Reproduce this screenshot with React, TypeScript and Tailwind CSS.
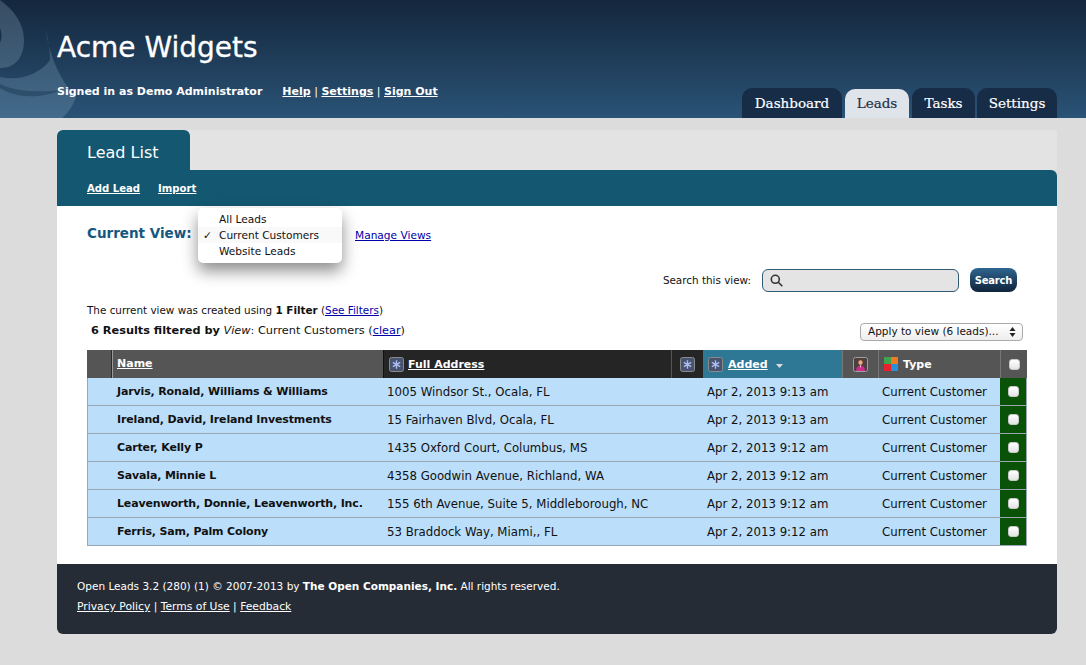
const leads = [
  ["Jarvis, Ronald, Williams & Williams", "1005 Windsor St., Ocala, FL", "Apr 2, 2013 9:13 am"],
  ["Ireland, David, Ireland Investments", "15 Fairhaven Blvd, Ocala, FL", "Apr 2, 2013 9:13 am"],
  ["Carter, Kelly P", "1435 Oxford Court, Columbus, MS", "Apr 2, 2013 9:12 am"],
  ["Savala, Minnie L", "4358 Goodwin Avenue, Richland, WA", "Apr 2, 2013 9:12 am"],
  ["Leavenworth, Donnie, Leavenworth, Inc.", "155 6th Avenue, Suite 5, Middleborough, NC", "Apr 2, 2013 9:12 am"],
  ["Ferris, Sam, Palm Colony", "53 Braddock Way, Miami,, FL", "Apr 2, 2013 9:12 am"],
];

function Swirl() {
  return (
    <svg className="absolute left-0 top-0" width="80" height="118" viewBox="0 0 80 118">
      {/* lower swoosh */}
      <path d="M45 28 C50 55 58 78 76 97 C73 106 68 113 62 118 L0 118 L0 77 C18 81 38 76 50 60 C50 48 48 38 45 28 Z" fill="#7fa3bd" fillOpacity="0.3" />
      {/* upper blob */}
      <path d="M0 0 C14 10 24 24 24 40 C24 52 20 60 14 64 C10 67 5 68 0 68 Z" fill="#8aa6ba" fillOpacity="0.3" />
      <path d="M0 28 C2 33 2 38 0 43 Z" fill="#1a3048" />
      {/* dark band */}
      <path d="M0 88 C14 97 36 100 62 90 C44 92 18 93 0 84 Z" fill="#1c3a56" fillOpacity="0.5" />
    </svg>
  );
}

function StarIcon() {
  return (
    <svg width="15" height="15" viewBox="0 0 15 15" className="shrink-0">
      <rect x="0.5" y="0.5" width="14" height="14" rx="2" fill="#47536f" stroke="#8a8a8a" />
      <path d="M7.500 3.200v8.600M3.800 5.300l7.400 4.400M11.200 5.300l-7.400 4.400" stroke="#aebcf0" strokeWidth="1.400" />
    </svg>
  );
}

function PersonIcon() {
  return (
    <svg width="15" height="15" viewBox="0 0 15 15" className="shrink-0">
      <rect x="0.500" y="0.500" width="14" height="14" rx="2" fill="#4a3f42" stroke="#a0a0a0" />
      <path d="M4.200 8V4.800C4.200 2.900 5.700 2 7.500 2s3.300.9 3.300 2.800V8z" fill="#6b3a22" />
      <ellipse cx="7.500" cy="5.600" rx="2.100" ry="2.400" fill="#e2ad90" />
      <path d="M3 14c0-3.400 1.600-5.500 4.500-5.500S12 10.600 12 14z" fill="#cf2a8c" />
      <path d="M6.800 8.500h1.400L7.500 11z" fill="#f3e3e6" />
    </svg>
  );
}

function ColorIcon() {
  return (
    <svg width="14" height="14" viewBox="0 0 14 14" className="shrink-0">
      <rect x="0" y="0" width="7" height="7" fill="#3fa34d" />
      <rect x="7" y="0" width="7" height="7" fill="#ee7a22" />
      <rect x="0" y="7" width="7" height="7" fill="#e8202a" />
      <rect x="7" y="7" width="7" height="7" fill="#2a8fd8" />
    </svg>
  );
}

function CheckBox() {
  return <span className="block h-[11px] w-[11px] rounded-[3px] border border-[#c8c8c8] bg-gradient-to-b from-white to-[#e4e4e4]" />;
}

export default function App() {
  return (
    <div className="min-h-[665px] bg-[#dcdcdc] font-['DejaVu_Sans',sans-serif] text-[10.4px] text-[#111]">
      <header className="relative h-[118px] overflow-hidden bg-gradient-to-b from-[#14273d] to-[#2a5376]">
        <Swirl />
        <div className="relative ml-[57px] flex h-full w-[1000px] items-end justify-between">
          <div className="h-full">
            <h1 className="pt-[29px] text-[28px] leading-[38px] text-white [-webkit-text-stroke:0.3px_white]">Acme Widgets</h1>
            <div className="mt-[16px] flex text-[11px] leading-[18px] font-bold text-white">
              <span>Signed in as Demo Administrator</span>
              <span className="ml-[20px] font-normal">
                <a className="font-bold underline">Help</a> | <a className="font-bold underline">Settings</a> | <a className="font-bold underline">Sign Out</a>
              </span>
            </div>
          </div>
          <nav className="flex font-['DejaVu_Serif',serif] text-[13.5px] text-white [-webkit-text-stroke:0.2px]">
            <a className="flex h-[30px] w-[100px] items-center justify-center rounded-t-[10px] bg-[#162c47]">Dashboard</a>
            <a className="ml-[3px] flex h-[29px] w-[64px] items-center justify-center self-end rounded-t-[10px] bg-[#dfe3ea] text-[#1d3148]">Leads</a>
            <a className="ml-[3px] flex h-[30px] w-[63px] items-center justify-center rounded-t-[10px] bg-[#162c47]">Tasks</a>
            <a className="ml-[2px] flex h-[30px] w-[80px] items-center justify-center rounded-t-[10px] bg-[#162c47]">Settings</a>
          </nav>
        </div>
      </header>

      <main className="ml-[57px] mt-[12px] w-[1000px] pb-[31px]">
        <div className="bg-[#e3e3e3]">
          <div className="flex h-[40px] w-[133px] items-center rounded-t-[6px] bg-[#135770] pl-[30px] pt-[5px] text-[16px] text-white">Lead List</div>
        </div>
        <div className="flex h-[36px] items-center gap-[18px] rounded-tr-[6px] bg-[#135770] pl-[30px] pt-[1px] text-[10.1px] font-bold text-white">
          <a className="underline">Add Lead</a>
          <a className="underline">Import</a>
        </div>

        <section className="relative bg-white px-[30px] pb-[18px] pt-[16px]">
          <div className="flex h-[24px] items-center">
            <span className="w-[268px] pb-[2px] text-[13.5px] font-bold text-[#14577f]">Current View:</span>
            <a className="mt-[3px] text-[10.6px] text-[#0000a8] underline">Manage Views</a>
          </div>
          <div className="absolute left-[141px] top-[2px] z-10 w-[144px] rounded-[5px] bg-white pb-[4px] pt-[3px] text-[10.6px] leading-[16px] shadow-[0_8px_16px_rgba(0,0,0,0.45)]">
            <div className="pl-[21px]">All Leads</div>
            <div className="relative bg-[#f9f9f9] pl-[21px]">
              <span className="absolute left-[5px]">✓</span>
              Current Customers
            </div>
            <div className="pl-[21px]">Website Leads</div>
          </div>

          <div className="mt-[22px] flex h-[24px] items-center justify-end pr-[10px]">
            <span className="pt-[1px]">Search this view:</span>
            <div className="ml-[11px] flex h-[23px] w-[197px] items-center rounded-[6px] border border-[#2f5c74] bg-[#e4e4e4] pl-[7px]">
              <svg width="13" height="13" viewBox="0 0 13 13" fill="none" stroke="#333" strokeWidth="1.600">
                <circle cx="5.300" cy="5.300" r="4" />
                <path d="M8.300 8.300l4 4" />
              </svg>
            </div>
            <button className="ml-[11px] h-[24px] w-[47px] rounded-[8px] bg-gradient-to-b from-[#2f6690] to-[#10243c] text-[10px] font-bold tracking-[-0.2px] text-white">Search</button>
          </div>

          <p className="mt-[10px] leading-[16px]">
            The current view was created using <b>1 Filter</b> (<a className="text-[#0000a8] underline">See Filters</a>)
          </p>
          <div className="mt-[4px] flex h-[20px] items-center justify-between pl-[4px] pr-[4px] text-[11.3px]">
            <p className="pb-[2px]">
              <b>6 Results filtered by</b> <i>View</i>: Current Customers (<a className="text-[#0000a8] underline">clear</a>)
            </p>
            <div className="flex h-[18px] w-[163px] items-center justify-between rounded-[4px] border border-[#aaa] bg-gradient-to-b from-white to-[#eee] pl-[7px] pr-[6px] text-[10.5px]">
              <span>Apply to view (6 leads)...</span>
              <svg width="7" height="10" viewBox="0 0 7 10" fill="#222"><path d="M3.500 0l3 4H.5zM3.500 10l-3-4h6z" /></svg>
            </div>
          </div>

          <div className="mt-[8px] w-[940px] border-x border-[#9aa7b2]">
            <div className="-mx-px flex h-[28px] items-stretch bg-[#555] text-[11px] font-bold text-white">
              <div className="w-[25px] border-r border-[#2a2a2a]" />
              <div className="flex w-[271px] items-center border-l border-[#999] pl-[4px]"><a className="underline">Name</a></div>
              <div className="flex w-[288px] items-center gap-[4px] border-l border-[#111] bg-[#252525] pl-[5px]">
                <StarIcon /><a className="mt-[2px] underline">Full Address</a>
              </div>
              <div className="flex w-[32px] items-center justify-center border-l border-[#555] bg-[#252525]"><StarIcon /></div>
              <div className="flex w-[139px] items-center gap-[5px] bg-[#2e7795] pl-[5px]">
                <StarIcon /><a className="mt-[2px] underline">Added</a>
                <svg className="ml-[3px] mt-[3px]" width="7" height="4" viewBox="0 0 7 4" fill="#ddd"><path d="M0 0h7L3.500 4z" /></svg>
              </div>
              <div className="flex w-[36px] items-center justify-center border-l border-[#777]"><PersonIcon /></div>
              <div className="flex w-[122px] items-center gap-[5px] border-l border-[#777] pl-[5px]">
                <ColorIcon /><span className="mt-[2px]">Type</span>
              </div>
              <div className="flex w-[27px] items-center justify-center border-l border-[#777]"><CheckBox /></div>
            </div>
            {leads.map((lead) => (
              <div key={lead[0]} className="flex h-[28px] items-stretch border-b border-[#9aa7b2] bg-[#bbdefb] text-[11.75px]">
                <div className="w-[25px]" />
                <div className="flex w-[270px] items-center pl-[4px] pt-[2px] text-[11px] font-bold tracking-[-0.15px] whitespace-nowrap">{lead[0]}</div>
                <div className="flex w-[320px] items-center pl-[4px] pt-[2px] whitespace-nowrap">{lead[1]}</div>
                <div className="flex w-[139px] items-center pl-[4px] pt-[2px] whitespace-nowrap">{lead[2]}</div>
                <div className="w-[36px]" />
                <div className="flex w-[122px] items-center pl-[4px] pt-[2px] whitespace-nowrap">Current Customer</div>
                <div className="flex flex-1 items-center justify-center bg-[#0a5207]"><CheckBox /></div>
              </div>
            ))}
          </div>
        </section>

        <footer className="h-[70px] rounded-b-[6px] bg-[#262c36] pl-[20px] pt-[12px] leading-[20px] text-white">
          <p className="text-[10.5px]">Open Leads 3.2 (280) (1) © 2007-2013 by <b>The Open Companies, Inc.</b> All rights reserved.</p>
          <p className="mt-[1px] text-[10.75px]"><a className="underline">Privacy Policy</a> | <a className="underline">Terms of Use</a> | <a className="underline">Feedback</a></p>
        </footer>
      </main>
    </div>
  );
}
